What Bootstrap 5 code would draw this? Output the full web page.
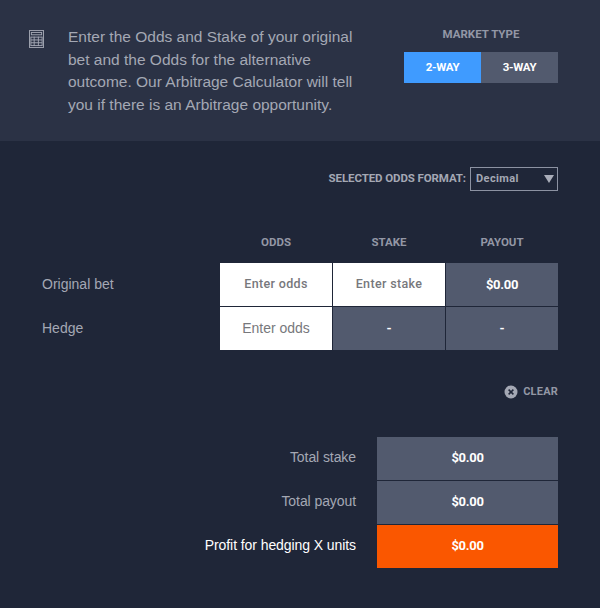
<!DOCTYPE html>
<html lang="en">
<head>
<meta charset="utf-8">
<title>Arbitrage Calculator</title>
<link href="https://cdn.jsdelivr.net/npm/bootstrap@5.3.0/dist/css/bootstrap.min.css" rel="stylesheet">
<style>
html,body{height:100%}
body{background:#1f2638;font-family:"Liberation Sans",Arial,sans-serif;color:#a4a8b4;overflow:hidden}
.din{font-family:Roboto,"Liberation Sans",sans-serif;font-weight:700}
.top-panel{height:141px;background:#2b3245;padding:26px 42px 0 29px}
.calc-ico{width:15px;height:18px;margin-top:4px;margin-right:24px;flex:none;display:block}
.intro{width:290px;margin:0;font-size:15.5px;line-height:22.5px;color:#a4a8b4}
.market{width:154px;margin-left:auto;margin-top:1px}
.market-label{font-size:11.5px;line-height:14px;color:#9397a5;text-align:center;margin-bottom:11px}
.seg{flex:1;height:31px;border:0;border-radius:0;padding:0;font-size:11.5px;letter-spacing:-.3px;color:#fff;background:#525a6e;display:flex;align-items:center;justify-content:center}
.seg.on{background:#3f9bff}
.format-row{padding:26px 42px 0 0;height:94px}
.format-label{font-size:11.5px;letter-spacing:-.1px;color:#a4a8b4;margin-right:4px;margin-top:3px}
.fmt{width:88px;height:24px;border:1px solid #8c92a2;display:flex;align-items:center;justify-content:space-between;padding:0 3px 0 5px;font-size:11px;letter-spacing:.4px;color:#a4a8b4}
.tri{width:0;height:0;border-left:5.5px solid transparent;border-right:5.5px solid transparent;border-top:8px solid #a9adb9}
.grid-wrap{padding:0 42px}
.head-cell{width:112px;margin-right:1px;text-align:center;font-size:11.5px;line-height:14px;color:#9397a5}
.head-cell:last-child{margin-right:0}
.heads{padding-left:178px;height:28px}
.calc-row{height:43px;margin-bottom:1px}
.row-name{width:178px;font-size:14px;color:#a4a8b4}
.cell{width:112px;margin-right:1px;height:100%;display:flex;align-items:center;justify-content:center;background:#525a6e;color:#fff;font-size:13px;letter-spacing:-.3px}
.cell:last-child{margin-right:0}
.cell.entry{background:#fff;color:#77787c;font-size:12.5px;letter-spacing:.35px}
.cell.plain{font-family:"Liberation Sans",sans-serif;font-weight:400;font-size:14px;letter-spacing:0}
.cell.entry.din{font-weight:500}
.clear-row{padding:34px 42px 0 0;height:86px}
.clear-x{width:14px;height:14px;margin-right:5px;display:block}
.clear-txt{font-size:11px;letter-spacing:.2px;color:#9397a5;line-height:14px}
.res-wrap{padding:0 42px}
.res-row{height:43px;margin-bottom:1px}
.res-name{flex:1;text-align:right;padding-right:21px;padding-bottom:2px;font-size:14px;letter-spacing:-.08px;color:#a4a8b4}
.res-name.hi{color:#fff}
.res-val{width:181px;height:100%;padding-bottom:1px;background:#525a6e;color:#fff;font-size:13px;letter-spacing:-.3px;display:flex;align-items:center;justify-content:center}
.res-val.hi{background:#fa5700}
</style>
</head>
<body>
<section class="top-panel d-flex align-items-start">
  <svg class="calc-ico" viewBox="0 0 16 19" aria-hidden="true">
    <g fill="none" stroke="#a4a8b4" stroke-width="1">
      <rect x=".5" y=".5" width="15" height="18"/>
      <rect x="2.5" y="2.5" width="11" height="2.5"/>
      <path d="M2 7.5H14M2 10.5H14M2 13.5H14M2 16.5H14M5.5 7V17M10 7V17M14 7V17M2 7V17"/>
    </g>
  </svg>
  <p class="intro">Enter the Odds and Stake of your original bet and the Odds for the alternative outcome. Our Arbitrage Calculator will tell you if there is an Arbitrage opportunity.</p>
  <div class="market">
    <div class="market-label din">MARKET TYPE</div>
    <div class="d-flex">
      <button type="button" class="btn seg on din">2-WAY</button>
      <button type="button" class="btn seg din">3-WAY</button>
    </div>
  </div>
</section>

<div class="format-row d-flex justify-content-end align-items-start">
  <span class="format-label din align-self-start">SELECTED ODDS FORMAT:</span>
  <div class="fmt din"><span>Decimal</span><span class="tri"></span></div>
</div>

<div class="grid-wrap">
  <div class="heads d-flex">
    <div class="head-cell din">ODDS</div>
    <div class="head-cell din">STAKE</div>
    <div class="head-cell din">PAYOUT</div>
  </div>
  <div class="calc-row d-flex align-items-center">
    <div class="row-name">Original bet</div>
    <div class="cell entry din">Enter odds</div>
    <div class="cell entry din">Enter stake</div>
    <div class="cell din">$0.00</div>
  </div>
  <div class="calc-row d-flex align-items-center">
    <div class="row-name">Hedge</div>
    <div class="cell entry plain">Enter odds</div>
    <div class="cell din">-</div>
    <div class="cell din">-</div>
  </div>
</div>

<div class="clear-row d-flex justify-content-end align-items-start">
  <svg class="clear-x" viewBox="0 0 14 14" aria-hidden="true">
    <circle cx="7" cy="7" r="6.5" fill="#a4a8b4"/>
    <path d="M4.6 4.6L9.4 9.4M9.4 4.6L4.6 9.4" stroke="#1f2638" stroke-width="1.5"/>
  </svg>
  <span class="clear-txt din">CLEAR</span>
</div>

<div class="res-wrap">
  <div class="res-row d-flex align-items-center">
    <div class="res-name">Total stake</div>
    <div class="res-val din">$0.00</div>
  </div>
  <div class="res-row d-flex align-items-center">
    <div class="res-name">Total payout</div>
    <div class="res-val din">$0.00</div>
  </div>
  <div class="res-row d-flex align-items-center">
    <div class="res-name hi">Profit for hedging X units</div>
    <div class="res-val hi din">$0.00</div>
  </div>
</div>
<script src="https://cdn.jsdelivr.net/npm/bootstrap@5.3.0/dist/js/bootstrap.bundle.min.js"></script>
</body>
</html>
